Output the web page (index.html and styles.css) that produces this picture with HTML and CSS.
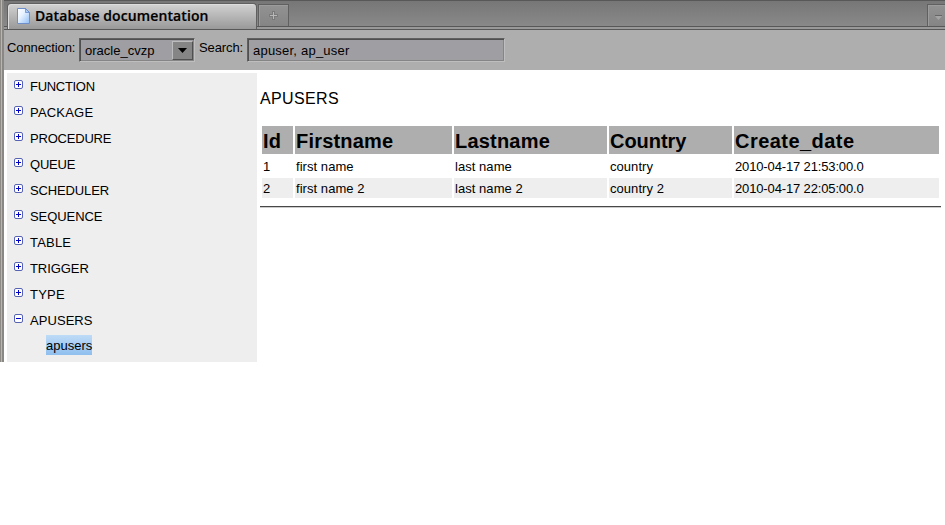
FILE: index.html
```html
<!DOCTYPE html>
<html lang="en">
<head>
<meta charset="utf-8">
<title>Database documentation</title>
<link rel="stylesheet" href="styles.css">
</head>
<body>
<div class="window">
  <div class="frame-edge"></div>
  <div class="content">
    <header class="tabs">
      <div class="tab active">
        <svg class="page-icon" width="13" height="16" viewBox="0 0 13 16"><defs><linearGradient id="page" x1="0" y1="0" x2="1" y2="1"><stop offset="0" stop-color="#fff"/><stop offset=".4" stop-color="#e8f3ff"/><stop offset="1" stop-color="#8fbdf5"/></linearGradient></defs><path d="M.5.5H8.500L12.500 4.500V15.500H.5Z" fill="url(#page)" stroke="#6f8fca"/><path d="M8.500.5V4.500H12.500Z" fill="#a9cbf5" stroke="#5f83c4" stroke-width=".7"/></svg>
        <span class="tab-title">Database documentation</span>
      </div>
      <div class="tab new-tab"><svg width="9" height="9" viewBox="0 0 9 9" shape-rendering="crispEdges"><path d="M3 0H6V3H9V6H6V9H3V6H0V3H3Z" fill="#7a7a7a"/><path d="M4 1H5V4H8V5H5V8H4V5H1V4H4Z" fill="#b8b8b8"/></svg></div>
      <div class="tab list-tab"><svg width="7" height="5" viewBox="0 0 7 5"><path d="M0 1H7L3.500 5Z" fill="#a4a4a4"/><path d="M0 .5H7" stroke="#666"/></svg></div>
    </header>
    <div class="toolbar">
      <span class="label connection">Connection:</span>
      <div class="field select"><span class="oracle">oracle_cvzp</span><div class="arrow"><svg width="9" height="5" viewBox="0 0 9 5"><path d="M0 0H9L4.500 5Z"/></svg></div></div>
      <span class="label search">Search:</span>
      <div class="field input"><span class="query">apuser, ap_user</span></div>
    </div>
    <div class="panes">
      <nav class="tree">
        <div class="node"><i class="box plus"></i><span class="function">FUNCTION</span></div>
        <div class="node"><i class="box plus"></i><span class="package">PACKAGE</span></div>
        <div class="node"><i class="box plus"></i><span class="procedure">PROCEDURE</span></div>
        <div class="node"><i class="box plus"></i><span class="queue">QUEUE</span></div>
        <div class="node"><i class="box plus"></i><span class="scheduler">SCHEDULER</span></div>
        <div class="node"><i class="box plus"></i><span class="sequence">SEQUENCE</span></div>
        <div class="node"><i class="box plus"></i><span class="package">TABLE</span></div>
        <div class="node"><i class="box plus"></i><span class="sequence">TRIGGER</span></div>
        <div class="node"><i class="box plus"></i><span class="package">TYPE</span></div>
        <div class="node"><i class="box"></i><span class="apusers">APUSERS</span></div>
        <div class="leaf">apusers</div>
      </nav>
      <main>
        <h1>APUSERS</h1>
        <table>
          <colgroup><col class="c-id"><col class="c-first"><col class="c-last"><col class="c-country"><col class="c-date"></colgroup>
          <thead><tr><th>Id</th><th>Firstname</th><th>Lastname</th><th class="country">Country</th><th class="created">Create_date</th></tr></thead>
          <tbody>
            <tr><td>1</td><td>first name</td><td>last name</td><td>country</td><td class="date">2010-04-17 21:53:00.0</td></tr>
            <tr class="even"><td>2</td><td>first name 2</td><td>last name 2</td><td>country 2</td><td class="date">2010-04-17 22:05:00.0</td></tr>
          </tbody>
        </table>
        <div class="rule"></div>
      </main>
    </div>
  </div>
</div>
</body>
</html>
```
FILE: styles.css
```css
* { box-sizing: border-box; }
body { margin: 0; background: #fff; color: #000; font: 13px/16px "Liberation Sans", Arial, sans-serif; overflow: hidden; }
svg { display: block; }
.window { display: flex; height: 362px; }
.frame-edge { width: 4px; flex: none; background: linear-gradient(90deg, #8e8a86 0 1px, #b5b5b5 1px 2px, #8b8784 2px 4px); }
.content { flex: 1; min-width: 0; }
.tabs { height: 30px; display: flex; align-items: flex-start; padding: 3px 0 0 3px; border-bottom: 1px solid #585858; background: linear-gradient(#585858 0 1px, transparent 1px 26px, #585858 26px 27px, #999 27px), linear-gradient(#767676, #898989 26px); }
.tab { border: 1px solid #606060; border-bottom: 0; height: 22px; }
.active { width: 250px; height: 26px; border-radius: 4px 4px 0 0; background: linear-gradient(#d2d2d2, #999); display: flex; padding: 4px 0 0 9px; box-shadow: inset 1px 1px #ddd; }
.tab-title { font: 600 14px/17px "Open Sans", sans-serif; margin: -1px 0 0 5px; letter-spacing: .1px; white-space: nowrap; -webkit-text-stroke: .2px #000; }
.new-tab { width: 31px; margin: 1px 0 0 1px; display: flex; align-items: center; justify-content: center; background: linear-gradient(#929292, #858585); box-shadow: inset 1px 1px #9c9c9c; }
.list-tab { width: 18px; margin: 1px 0 0 auto; padding: 10px 0 0 7px; border-right: 0; background: linear-gradient(#929292, #858585); box-shadow: inset 1px 1px #9c9c9c; }
.toolbar { height: 40px; background: #aeaeae; display: flex; padding: 8px 0 0 3px; }
.label { line-height: 20px; white-space: nowrap; }
.connection { width: 72px; letter-spacing: -.1px; }
.search { width: 48px; margin-left: 4px; letter-spacing: -.1px; }
.field { height: 24px; border: 1px solid; border-color: #606060 #bebebe #bebebe #606060; background: #9f9ea3; box-shadow: inset 1px 1px #4f4f4f, inset -1px -1px #858585; padding: 4px 0 0 5px; white-space: nowrap; }
.query { letter-spacing: .22px; }
.select { width: 116px; display: flex; justify-content: space-between; padding: 2px 1px 1px 5px; }
.select .oracle { padding-top: 2px; }
.arrow { width: 21px; background: #858585; border: 1px solid #bcbcbc; border-right-color: #505050; border-bottom-color: #505050; display: flex; align-items: center; justify-content: center; }
.input { width: 258px; }
.panes { display: flex; padding: 3px 4px 0 3px; height: 292px; }
.tree { width: 250px; flex: none; background: #eee; padding-top: 1px; }
.node { display: flex; height: 26px; padding: 6px 0 0 7px; }
.node span { margin: -1px 0 0 7px; line-height: 15px; letter-spacing: .2px; }
.node .function { letter-spacing: -.3px; }
.node .procedure { letter-spacing: -.2px; }
.node .queue { letter-spacing: -.2px; }
.node .scheduler { letter-spacing: -.13px; }
.node .sequence { letter-spacing: -.07px; }
.node .apusers { letter-spacing: .06px; }
.box { width: 9px; height: 9px; border: 1px solid #5663b5; border-radius: 2px; background: linear-gradient(#0000c8, #0000c8) center / 5px 1px no-repeat #fff; }
.plus { background: linear-gradient(#0000c8, #0000c8) center / 5px 1px no-repeat, linear-gradient(#0000c8, #0000c8) center / 1px 5px no-repeat #fff; }
.leaf { margin: 1px 0 0 39px; width: 46px; height: 20px; line-height: 22px; background: linear-gradient(#bedbf7, #8fbfee); white-space: nowrap; }
main { flex: 1; padding-left: 3px; }
h1 { margin: 16px 0 16px; font-size: 16px; line-height: 19px; font-weight: normal; letter-spacing: .35px; }
table { width: 681px; table-layout: fixed; border-collapse: separate; border-spacing: 2px; }
.c-id { width: 31px; } .c-first { width: 157px; } .c-last { width: 153px; } .c-country { width: 123px; } .c-date { width: 205px; }
th { height: 28px; padding: 2px 1px 0; text-align: left; background: #aeaeae; font-size: 20px; line-height: 24px; letter-spacing: .2px; }
.country { letter-spacing: -.05px; }
.created { letter-spacing: .45px; }
td { height: 20px; padding: 3px 1px 1px; line-height: 16px; white-space: nowrap; letter-spacing: .05px; }
.date { letter-spacing: -.14px; }
.even td { background: #eee; }
.rule { margin-top: 6px; height: 2px; width: 681px; background: #484848; border-bottom: 1px solid #ccc; }
```
